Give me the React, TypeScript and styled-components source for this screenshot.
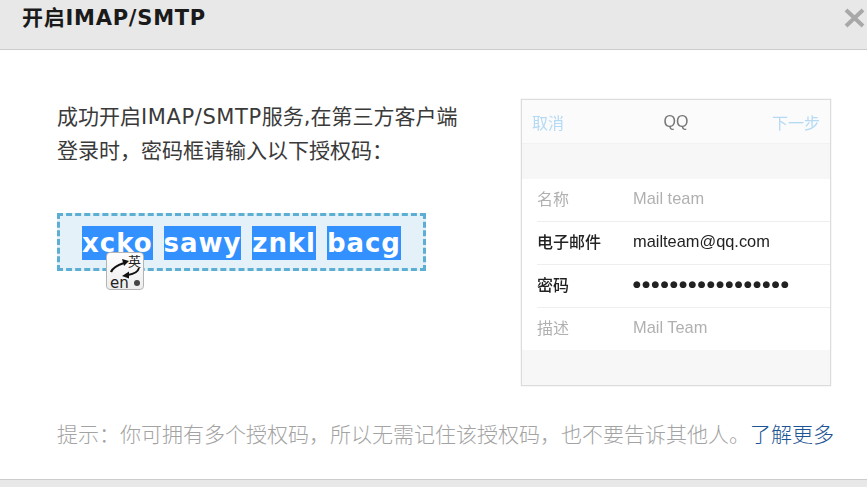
import styled, { createGlobalStyle } from "styled-components";

const GlobalStyle = createGlobalStyle`
  html, body {
    margin: 0;
    padding: 0;
    background: #fff;
    overflow: hidden;
  }
`;

const sans = `"DejaVu Sans", "Noto Sans CJK SC", sans-serif`;
const cjk = `"Noto Sans CJK SC", "DejaVu Sans", sans-serif`;

const Dialog = styled.div`
  width: 867px;
  height: 487px;
  display: flex;
  flex-direction: column;
  font-family: ${sans};
  color: #333;
`;

const Header = styled.div`
  height: 49px;
  flex: none;
  background: #e8e8e8;
  border-bottom: 1px solid #ccc;
  display: flex;
  justify-content: space-between;
  padding: 0 2px 0 22px;
`;

const Title = styled.h1`
  margin: 0;
  font-size: 21px;
  line-height: 37px;
  font-weight: 700;
  color: #1a1a1a;
  letter-spacing: 0.75px;
`;

const Close = styled.svg`
  width: 21px;
  height: 20px;
  margin-top: 8px;
  filter: blur(0.7px);
`;

const Content = styled.div`
  flex: 1;
  padding: 49px 36px 0 57px;
  display: flex;
  flex-direction: column;
`;

const Columns = styled.div`
  display: flex;
  justify-content: space-between;
`;

const Left = styled.div`
  width: 410px;
  padding-top: 1px;
`;

const Intro = styled.p`
  margin: 0;
  font-size: 21px;
  line-height: 34px;
  color: #3a3a3a;
  font-family: ${sans};
`;

const Latin = styled.span`
  letter-spacing: 0.6px;
`;

const CodeBox = styled.div`
  position: relative;
  margin-top: 45px;
  width: 369px;
  height: 58px;
  box-sizing: border-box;
  padding-top: 1px;
  border: 3px dashed #5cafd2;
  background: #e5f1f8;
  display: flex;
  align-items: center;
  justify-content: center;
  gap: 11px;
`;

const Word = styled.span`
  background: #3390ff;
  color: #fff;
  font-size: 26px;
  font-weight: 700;
  line-height: 34px;
  height: 34px;
  letter-spacing: 0.95px;
`;

const ImeBadge = styled.div`
  position: absolute;
  left: 46px;
  top: 36px;
  width: 38px;
  height: 38px;
  box-sizing: border-box;
  border: 1px solid #b4b4b4;
  border-radius: 4px;
  background: linear-gradient(#fdfdfd, #eee);
  color: #222;
`;

const ImeZh = styled.span`
  position: absolute;
  right: 2px;
  top: 0;
  font-family: ${cjk};
  font-size: 13px;
  line-height: 16px;
`;

const ImeEn = styled.span`
  position: absolute;
  left: 3px;
  bottom: -2px;
  font-size: 15px;
  line-height: 16px;
`;

const ImeArrows = styled.svg`
  position: absolute;
  left: 0;
  top: 0;
  width: 36px;
  height: 36px;
`;

const Phone = styled.div`
  width: 310px;
  height: 287px;
  box-sizing: border-box;
  border: 1px solid #dcdcdc;
  background: #f7f7f8;
  display: flex;
  flex-direction: column;
  font-family: ${cjk};
  font-size: 16px;
  box-shadow: 0 0 1px #ccc;
`;

const PhoneBar = styled.div`
  height: 43px;
  flex: none;
  background: #fbfbfb;
  border-bottom: 1px solid #f2f2f2;
  display: grid;
  grid-template-columns: 1fr auto 1fr;
  align-items: center;
  padding: 0 10px;
  color: #b5daf4;
  filter: blur(0.7px);
`;

const PhoneTitle = styled.span`
  color: #777;
  font-family: "Liberation Sans", sans-serif;
`;

const PhoneNext = styled.span`
  justify-self: end;
`;

const PhoneList = styled.div`
  margin-top: 35px;
  background: #fff;
  padding-left: 15px;
`;

const PhoneRow = styled.div<{ $strong?: boolean; $last?: boolean }>`
  height: ${(p) => (p.$last ? "42px" : "43px")};
  box-sizing: border-box;
  padding-bottom: 4px;
  display: flex;
  align-items: center;
  border-bottom: ${(p) => (p.$last ? "none" : "1px solid #eee")};
  color: ${(p) => (p.$strong ? "#222" : "#b0b0b0")};
  font-weight: ${(p) => (p.$strong ? 500 : 400)};
  filter: blur(0.6px);
`;

const PhoneLabel = styled.span`
  width: 96px;
  flex: none;
`;

const PhoneValue = styled.span`
  font-family: "Liberation Sans", sans-serif;
  font-size: 16.4px;
`;

const Dots = styled.span`
  font-family: "DejaVu Sans", sans-serif;
  font-size: 9px;
  letter-spacing: 1.4px;
`;

const Hint = styled.p`
  margin: 27px 0 0;
  font-size: 21px;
  line-height: 40px;
  color: #a3a3a3;
  white-space: nowrap;
  font-family: ${cjk};
  font-weight: 300;
`;

const MoreLink = styled.a`
  color: #1d5494;
  text-decoration: none;
`;

const Footer = styled.div`
  height: 7px;
  flex: none;
  background: #e8e8e8;
  border-top: 1px solid #ccc;
`;

export default function App() {
  return (
    <>
      <GlobalStyle />
      <Dialog>
        <Header>
          <Title>开启IMAP/SMTP</Title>
          <Close viewBox="0 0 21 20">
            <path d="M2 2 L19 18 M19 2 L2 18" stroke="#a8a8a8" strokeWidth="4" fill="none" />
          </Close>
        </Header>
        <Content>
          <Columns>
            <Left>
              <Intro>
                成功开启<Latin>IMAP/SMTP</Latin>服务,在第三方客户端
                <br />
                登录时，密码框请输入以下授权码：
              </Intro>
              <CodeBox>
                <Word>xcko</Word>
                <Word>sawy</Word>
                <Word>znkl</Word>
                <Word>bacg</Word>
                <ImeBadge>
                  <ImeArrows viewBox="0 0 36 36">
                    <path d="M4 19 C6 14 11 12 17 10" stroke="#111" strokeWidth="2.2" fill="none" />
                    <path d="M15 6 L22 8 L17 13 Z" fill="#111" />
                    <path d="M32 15 C31 19 27 21 21 22" stroke="#111" strokeWidth="1.8" fill="none" />
                    <path d="M22 18.5 L15 23 L22 25.5 Z" fill="#111" />
                    <circle cx="30" cy="30" r="3" fill="#444" />
                  </ImeArrows>
                  <ImeZh>英</ImeZh>
                  <ImeEn>en</ImeEn>
                </ImeBadge>
              </CodeBox>
            </Left>
            <Phone>
              <PhoneBar>
                <span>取消</span>
                <PhoneTitle>QQ</PhoneTitle>
                <PhoneNext>下一步</PhoneNext>
              </PhoneBar>
              <PhoneList>
                <PhoneRow>
                  <PhoneLabel>名称</PhoneLabel>
                  <PhoneValue>Mail team</PhoneValue>
                </PhoneRow>
                <PhoneRow $strong>
                  <PhoneLabel>电子邮件</PhoneLabel>
                  <PhoneValue>mailteam@qq.com</PhoneValue>
                </PhoneRow>
                <PhoneRow $strong>
                  <PhoneLabel>密码</PhoneLabel>
                  <Dots>●●●●●●●●●●●●●●●●●</Dots>
                </PhoneRow>
                <PhoneRow $last>
                  <PhoneLabel>描述</PhoneLabel>
                  <PhoneValue>Mail Team</PhoneValue>
                </PhoneRow>
              </PhoneList>
            </Phone>
          </Columns>
          <Hint>
            提示：你可拥有多个授权码，所以无需记住该授权码，也不要告诉其他人。
            <MoreLink href="#">了解更多</MoreLink>
          </Hint>
        </Content>
        <Footer />
      </Dialog>
    </>
  );
}
